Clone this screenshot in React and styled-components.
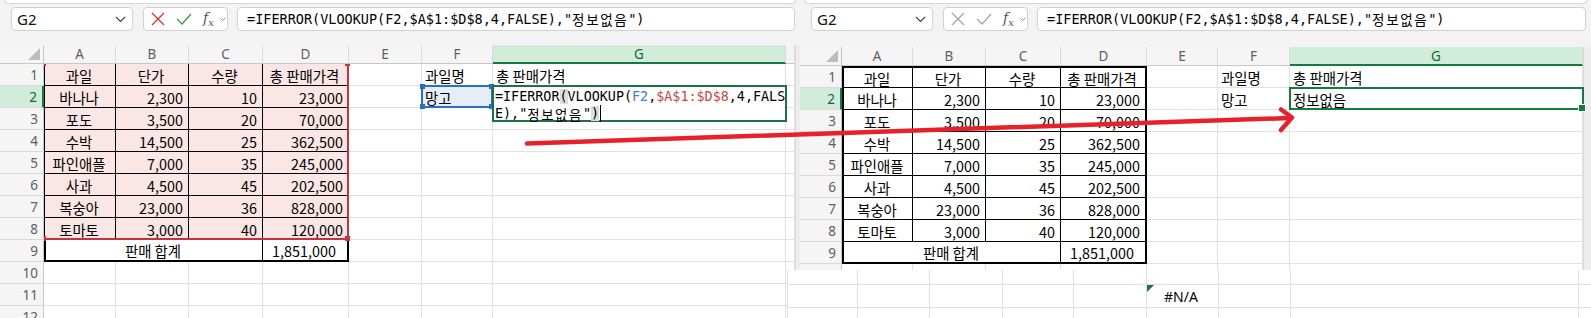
import React from "react";
import styled, { createGlobalStyle, css } from "styled-components";

const GlobalStyle = createGlobalStyle`
  html, body { margin: 0; padding: 0; background: #fff; }
  body {
    width: 1591px;
    height: 318px;
    overflow: hidden;
    font-family: "Noto Sans CJK KR", "Noto Sans", sans-serif;
  }
`;

const fruits = [
  ["과일", "단가", "수량", "총 판매가격"],
  ["바나나", "2,300", "10", "23,000"],
  ["포도", "3,500", "20", "70,000"],
  ["수박", "14,500", "25", "362,500"],
  ["파인애플", "7,000", "35", "245,000"],
  ["사과", "4,500", "45", "202,500"],
  ["복숭아", "23,000", "36", "828,000"],
  ["토마토", "3,000", "40", "120,000"],
];

const LETTERS = ["A", "B", "C", "D", "E", "F", "G"];
const COLS_LEFT = [44, 72, 73, 74, 86, 73, 71, 293, 9];
const COLS_RIGHT = [42, 71, 73, 75, 86, 71, 72, 293];
const FRAG_COLS = [70, 72, 73, 71, 73, 72, 72, 288, 13];

const GRID = "#e1e1e1";
const GREEN = "#107c41";

export default function App() {
  return (
    <>
      <GlobalStyle />
      <Page>
        <ExcelWindow width={800} height={318} cols={COLS_LEFT} edge={5} edit />
        <RightColumn>
          <ExcelWindow width={791} height={270} cols={COLS_RIGHT} edge={8} gridGap={16} />
          <Fragment>
            {FRAG_COLS.map((w, i) =>
              [1, 2, 3].map((r) => (
                <FragCell key={i + "-" + r} $col={i + 1} $row={r}>
                  {i === 5 && r === 2 && (
                    <>
                      <ErrorFlag />
                      #N/A
                    </>
                  )}
                </FragCell>
              ))
            )}
          </Fragment>
        </RightColumn>
        <Arrow width="1591" height="318" viewBox="0 0 1591 318">
          <path d="M527 143.5 L1290 118" />
          <path d="M1281 109.5 L1292 117.5 L1281 130" />
        </Arrow>
      </Page>
    </>
  );
}

function ExcelWindow({ width, height, cols, edge, edit, gridGap = 14 }) {
  return (
    <Window $w={width} $h={height}>
      <RibbonEdge />
      <FormulaRow $mb={gridGap}>
        <NameBox>
          G2
          <svg width="11" height="7" viewBox="0 0 11 7">
            <path d="M1 1 L5.5 5.5 L10 1" fill="none" stroke="#444" strokeWidth="1.2" />
          </svg>
        </NameBox>
        <IconBox>
          <svg width="14" height="14" viewBox="0 0 14 14">
            <path d="M1 1 L13 13 M13 1 L1 13" fill="none" stroke={edit ? "#d13438" : "#a6a6a6"} strokeWidth="1.3" />
          </svg>
          <svg width="16" height="14" viewBox="0 0 16 14">
            <path d="M1 7 L6 12 L15 2" fill="none" stroke={edit ? "#2e9e4f" : "#a6a6a6"} strokeWidth="1.3" />
          </svg>
          <Fx>
            <i>f</i>
            <sub>x</sub>
          </Fx>
          <svg width="7" height="5" viewBox="0 0 7 5">
            <path d="M1 1 L3.5 3.5 L6 1" fill="none" stroke="#9a9a9a" strokeWidth="1" />
          </svg>
        </IconBox>
        <FormulaInput>
          =IFERROR(VLOOKUP(F2,$A$1:$D$8,4,FALSE),"<Hangul>정보없음</Hangul>")
        </FormulaInput>
      </FormulaRow>
      <SheetArea>
        <Sheet cols={cols} edit={edit} />
        <ScrollEdge $w={edge} />
      </SheetArea>
    </Window>
  );
}

function Sheet({ cols, edit }) {
  const cells = [];
  const black = "#000";
  const pink = edit ? "#fbe6e6" : undefined;

  cells.push(<Corner key="corner" $col={1} $row={1} />);
  LETTERS.forEach((L, i) =>
    cells.push(
      <ColHead key={"h" + L} $col={i + 2} $row={1} $sel={L === "G"}>
        {L}
      </ColHead>
    )
  );
  if (cols.length > 8) cells.push(<ColHead key="hx" $col={9} $row={1} />);

  for (let r = 1; r <= 12; r++) {
    const gr = r + 1;
    cells.push(
      <RowHead key={"r" + r} $col={1} $row={gr} $sel={r === 2}>
        {r}
      </RowHead>
    );

    if (r <= 8) {
      fruits[r - 1].forEach((v, i) => {
        const c = i + 1;
        cells.push(
          <Cell
            key={"c" + r + c}
            $col={c + 1}
            $row={gr}
            $align={c === 1 || r === 1 ? "center" : "right"}
            $fill={pink}
            $line={black}
            $bl={c === 1 ? (edit ? "1px solid #000" : "2px solid #000") : undefined}
            $bt={r === 1 && !edit ? "2px solid #000" : undefined}
            $br={c === 4 && !edit ? "2px solid #000" : undefined}
          >
            {v}
          </Cell>
        );
      });
    } else if (r === 9) {
      cells.push(
        <Cell key="sumlabel" $col="2 / 5" $row={gr} $align="center" $line={black} $bl="2px solid #000" $bb="2px solid #000">
          판매 합계
        </Cell>
      );
      cells.push(
        <Cell key="sumvalue" $col={5} $row={gr} $align="center" $line={black} $br="2px solid #000" $bb="2px solid #000">
          1,851,000
        </Cell>
      );
    } else {
      [2, 3, 4, 5].forEach((c) => cells.push(<Cell key={"b" + r + c} $col={c} $row={gr} />));
    }

    let f = "";
    let g = "";
    if (r === 1) {
      f = "과일명";
      g = "총 판매가격";
    }
    if (r === 2) {
      f = "망고";
      g = edit ? "" : "정보없음";
    }
    cells.push(<Cell key={"e" + r} $col={6} $row={gr} />);
    cells.push(
      <Cell key={"f" + r} $col={7} $row={gr} $fill={edit && r === 2 ? "#e4edf8" : undefined}>
        {f}
      </Cell>
    );
    cells.push(
      <Cell key={"g" + r} $col={8} $row={gr}>
        {g}
      </Cell>
    );
    if (cols.length > 8) cells.push(<Cell key={"x" + r} $col={9} $row={gr} />);
  }

  return (
    <Grid $cols={cols}>
      {cells}
      {edit ? (
        <>
          <RefRange $col="2 / 6" $row="2 / 10" $color="#c4343a">
            <Handle $pos="tl" />
            <Handle $pos="tr" />
            <Handle $pos="bl" />
            <Handle $pos="br" />
          </RefRange>
          <FRef $col={7} $row={3} $color="#2a6fc4">
            <Handle $pos="tl" />
            <Handle $pos="tr" />
            <Handle $pos="bl" />
            <Handle $pos="br" />
          </FRef>
          <EditBox $col={8} $row="3 / 5">
            <EditLine>
              =IFERROR<Paren>(</Paren>VLOOKUP(<Ref $c="#3d7dcf">F2</Ref>,<Ref $c="#c94848">$A$1:$D$8</Ref>,4,FALS
            </EditLine>
            <EditLine>
              E),"<Hangul>정보없음</Hangul>"<Paren>)</Paren>
              <Caret />
            </EditLine>
          </EditBox>
        </>
      ) : (
        <SelBox $col={8} $row={3} />
      )}
    </Grid>
  );
}

const Page = styled.div`
  position: relative;
  display: flex;
  width: 1591px;
  height: 318px;
  overflow: hidden;
`;

const RightColumn = styled.div`
  display: flex;
  flex-direction: column;
  width: 791px;
`;

const Window = styled.div`
  width: ${(p) => p.$w}px;
  height: ${(p) => p.$h}px;
  flex-shrink: 0;
  display: flex;
  flex-direction: column;
  background: #f3f3f3;
  overflow: hidden;
`;

const RibbonEdge = styled.div`
  height: 3px;
  margin: 0 4px;
  background: #fff;
  border: 1px solid #d6d6d6;
  border-top: none;
  border-radius: 0 0 6px 6px;
`;

const FormulaRow = styled.div`
  display: flex;
  height: 24px;
  gap: 10px;
  margin: 3px 5px ${(p) => p.$mb}px 11px;
`;

const BarBox = styled.div`
  box-sizing: border-box;
  display: flex;
  align-items: center;
  background: #fff;
  border: 1px solid #d1d1d1;
  border-radius: 4px;
`;

const NameBox = styled(BarBox)`
  width: 122px;
  justify-content: space-between;
  padding: 0 6px 0 5px;
  font-family: "Noto Sans", sans-serif;
  font-size: 15px;
  color: #111;
`;

const IconBox = styled(BarBox)`
  width: 85px;
  gap: 11px;
  padding-left: 7px;
  margin-right: -1px;
`;

const Fx = styled.span`
  font-family: "DejaVu Serif", serif;
  font-size: 14px;
  color: #555;
  line-height: 1;
  margin-right: -6px;
  i { font-style: italic; }
  sub { font-size: 10px; vertical-align: -3px; font-style: italic; }
`;

const FormulaInput = styled(BarBox)`
  flex: 1;
  padding-left: 9px;
  font-family: "DejaVu Sans Mono", monospace;
  font-size: 13.5px;
  color: #000;
  white-space: pre;
`;

const Hangul = styled.span`
  font-family: "Noto Sans CJK KR", sans-serif;
  letter-spacing: 1.6px;
`;

const SheetArea = styled.div`
  flex: 1;
  display: flex;
  min-height: 0;
`;

const ScrollEdge = styled.div`
  width: ${(p) => p.$w}px;
  background: #ededed;
  border-left: 1px solid #dcdcdc;
`;

const Grid = styled.div`
  display: grid;
  grid-template-columns: ${(p) => p.$cols.map((c) => c + "px").join(" ")};
  grid-template-rows: 19px;
  grid-auto-rows: 22px;
  align-content: start;
  background: #fff;
`;

const placed = css`
  grid-column: ${(p) => p.$col};
  grid-row: ${(p) => p.$row};
  box-sizing: border-box;
`;

const Cell = styled.div`
  ${placed};
  display: flex;
  align-items: center;
  justify-content: ${(p) => (p.$align === "center" ? "center" : p.$align === "right" ? "flex-end" : "flex-start")};
  padding: 1px 5px 0 3px;
  background: ${(p) => p.$fill || "#fff"};
  border-right: 1px solid ${(p) => p.$line || GRID};
  border-bottom: 1px solid ${(p) => p.$line || GRID};
  ${(p) => p.$bl && css`border-left: ${p.$bl};`}
  ${(p) => p.$bt && css`border-top: ${p.$bt};`}
  ${(p) => p.$br && css`border-right: ${p.$br};`}
  ${(p) => p.$bb && css`border-bottom: ${p.$bb};`}
  font-size: 14.4px;
  color: #000;
  white-space: nowrap;
  overflow: hidden;
`;

const Head = styled.div`
  ${placed};
  position: relative;
  z-index: 4;
  display: flex;
  align-items: center;
  font-family: "Noto Sans", sans-serif;
  font-size: 13.5px;
  color: ${(p) => (p.$sel ? "#0e6b37" : "#5f5f5f")};
  background: ${(p) => (p.$sel ? "#d2ecdb" : "#f5f5f5")};
`;

const ColHead = styled(Head)`
  justify-content: center;
  border-right: 1px solid #dadada;
  border-bottom: ${(p) => (p.$sel ? `2px solid ${GREEN}` : "1px solid #c8c8c8")};
`;

const RowHead = styled(Head)`
  justify-content: flex-end;
  padding-right: 5px;
  border-bottom: 1px solid #dadada;
  border-right: ${(p) => (p.$sel ? `2px solid ${GREEN}` : "1px solid #c8c8c8")};
`;

const Corner = styled.div`
  ${placed};
  position: relative;
  z-index: 4;
  background: #f5f5f5;
  border-right: 1px solid #c8c8c8;
  border-bottom: 1px solid #c8c8c8;
  &::after {
    content: "";
    position: absolute;
    right: 3px;
    bottom: 3px;
    border-left: 12px solid transparent;
    border-bottom: 12px solid #bdbdbd;
  }
`;

const RefRange = styled.div`
  ${placed};
  position: relative;
  z-index: 2;
  margin: -1px 0 0 -1px;
  border: 1px solid ${(p) => p.$color};
  border-right-width: 2px;
  border-bottom-width: 2px;
  color: ${(p) => p.$color};
  pointer-events: none;
`;

const FRef = styled.div`
  ${placed};
  position: relative;
  z-index: 2;
  margin: -1px 0 0 -1px;
  border: 2px solid ${(p) => p.$color};
  color: ${(p) => p.$color};
  pointer-events: none;
`;

const Handle = styled.span`
  position: absolute;
  width: 5px;
  height: 5px;
  background: currentColor;
  ${(p) => (p.$pos[0] === "t" ? "top: -3px;" : "bottom: -3px;")}
  ${(p) => (p.$pos[1] === "l" ? "left: -3px;" : "right: -3px;")}
`;

const EditBox = styled.div`
  ${placed};
  align-self: start;
  height: 37px;
  position: relative;
  z-index: 3;
  margin: -1px -1px 0 -1px;
  padding: 1px 0 0 1px;
  background: #fff;
  border: 2px solid #1e7145;
  font-family: "DejaVu Sans Mono", monospace;
  font-size: 13.4px;
  color: #000;
`;

const EditLine = styled.div`
  display: flex;
  align-items: center;
  height: 17px;
  white-space: pre;
`;

const Ref = styled.span`
  color: ${(p) => p.$c};
`;

const Paren = styled.span`
  background: #dedede;
`;

const Caret = styled.span`
  width: 1px;
  height: 17px;
  margin-left: 1px;
  background: #000;
`;

const SelBox = styled.div`
  ${placed};
  position: relative;
  z-index: 2;
  margin: -1px -1px 0 -1px;
  border: 2px solid ${GREEN};
  &::after {
    content: "";
    position: absolute;
    right: -4px;
    bottom: -4px;
    width: 6px;
    height: 6px;
    background: ${GREEN};
    border: 1px solid #fff;
  }
`;

const Fragment = styled.div`
  display: grid;
  grid-template-columns: ${FRAG_COLS.map((c) => c + "px").join(" ")};
  grid-template-rows: 15px 23px 10px;
  width: 804px;
  margin-left: -13px;
  background: #fff;
  position: relative;
  z-index: 5;
`;

const FragCell = styled.div`
  ${placed};
  position: relative;
  display: flex;
  align-items: center;
  padding-left: 17px;
  border-left: 1px solid ${GRID};
  border-bottom: ${(p) => (p.$row < 3 ? `1px solid ${GRID}` : "none")};
  font-family: "Noto Sans", sans-serif;
  font-size: 14px;
  color: #000;
`;

const ErrorFlag = styled.span`
  position: absolute;
  left: 0;
  top: 0;
  border-top: 7px solid #1e7145;
  border-right: 7px solid transparent;
`;

const Arrow = styled.svg`
  position: absolute;
  left: 0;
  top: 0;
  z-index: 10;
  pointer-events: none;
  path {
    fill: none;
    stroke: #e8202a;
    stroke-width: 4.5;
    stroke-linecap: round;
    stroke-linejoin: round;
  }
`;
